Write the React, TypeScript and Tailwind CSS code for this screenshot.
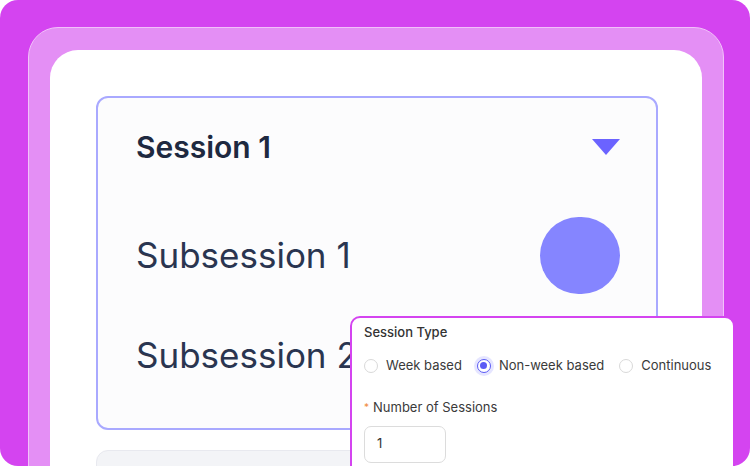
import React from "react";

function Radio({ checked, label }: { checked?: boolean; label: string }) {
  return (
    <label className="flex items-center gap-2">
      {checked ? (
        <span className="flex h-[14px] w-[14px] items-center justify-center rounded-full border border-[#5b5bf5] bg-white shadow-[0_0_0_3px_rgba(110,110,255,0.18)]">
          <span className="h-[7px] w-[7px] rounded-full bg-[#5b5bf5]" />
        </span>
      ) : (
        <span className="h-[14px] w-[14px] rounded-full border border-[#d9d9d9] bg-white" />
      )}
      <span className="text-[13px] text-[#3a3a3a]">{label}</span>
    </label>
  );
}

function SessionTypePopup() {
  return (
    <div className="absolute left-[350px] top-[316px] h-[170px] w-[385px] rounded-[10px] border-2 border-[#d444f0] bg-white pl-3 pt-[5px]">
      <div className="text-[13px] font-medium leading-[18px] text-[#333]">Session Type</div>
      <div className="mt-[15px] flex items-center gap-[15px]">
        <Radio label="Week based" />
        <Radio checked label="Non-week based" />
        <Radio label="Continuous" />
      </div>
      <div className="mt-[22px] flex items-center gap-[4px] text-[13px] leading-[18px] text-[#3a3a3a]">
        <span className="text-[10px] text-[#f08a3c]">*</span>
        <span>Number of Sessions</span>
      </div>
      <div className="mt-[10px] flex h-[37px] w-[82px] items-center rounded-[7px] border border-[#dcdcdc] px-3 text-[13px] text-[#333]">
        1
      </div>
    </div>
  );
}

export default function App() {
  return (
    <div
      className="relative h-[466px] w-[750px] overflow-hidden bg-white"
      style={{ fontFamily: "Inter, 'Noto Sans', sans-serif" }}
    >
      <div className="h-full w-full rounded-[18px] bg-[#d444f0] pl-[28px] pr-[26px] pt-[27px]">
        <div className="h-[480px] rounded-t-[30px] border border-[#f2c2fa] bg-[#e48ff5] px-[21px] pt-[22px]">
          <div className="h-[460px] rounded-t-[28px] bg-white pl-[46px] pr-[44px] pt-[46px]">
            <div className="flex h-[334px] flex-col rounded-[12px] border-2 border-[#a9a9ff] bg-[#fcfcfd] pl-[38px] pr-[36px]">
              <div className="flex h-[98px] items-center justify-between">
                <span className="text-[30px] font-semibold text-[#1e2940]">Session 1</span>
                <svg width="28" height="17" viewBox="0 0 28 17">
                  <path d="M0 0 H28 L14 16 Z" fill="#6b63ff" />
                </svg>
              </div>
              <div className="mt-[9px] flex h-[100px] items-center justify-between">
                <span className="text-[35px] text-[#2a3550]">Subsession 1</span>
                <span className="h-[77px] w-[80px] rounded-full bg-[#8585ff]" />
              </div>
              <div className="flex h-[100px] items-center">
                <span className="text-[35px] text-[#2a3550]">Subsession 2</span>
              </div>
            </div>
            <div className="mt-[20px] h-[60px] rounded-[12px] border border-[#e8e9ef] bg-[#f3f4f7]" />
          </div>
        </div>
      </div>
      <SessionTypePopup />
    </div>
  );
}
